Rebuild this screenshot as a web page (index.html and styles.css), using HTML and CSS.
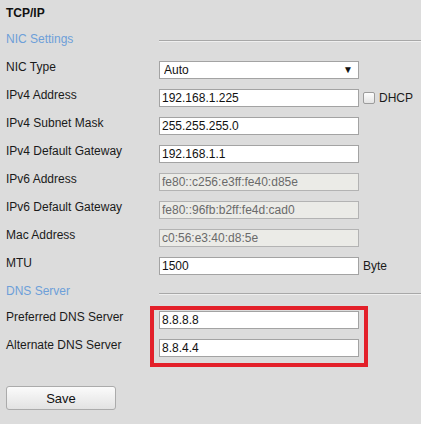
FILE: index.html
```html
<!DOCTYPE html>
<html lang="en">
<head>
    <meta charset="UTF-8">
    <meta name="viewport" content="width=device-width, initial-scale=1.0">
    <title>TCP/IP</title>
    <link rel="stylesheet" href="styles.css">
</head>
<body>
    <div class="page">
        <h1 class="title">TCP/IP</h1>

        <div class="section-head">
            <span class="section-name">NIC Settings</span>
            <span class="section-rule"></span>
        </div>

        <div class="row">
            <label class="row-label" for="nic-type">NIC Type</label>
            <span class="select-wrap">
                <select class="field" id="nic-type">
                    <option>Auto</option>
                </select>
            </span>
        </div>
        <div class="row">
            <label class="row-label" for="ipv4">IPv4 Address</label>
            <input class="field" id="ipv4" type="text" value="192.168.1.225">
            <label class="check"><input type="checkbox" class="check-box"> DHCP</label>
        </div>
        <div class="row">
            <label class="row-label" for="mask">IPv4 Subnet Mask</label>
            <input class="field" id="mask" type="text" value="255.255.255.0">
        </div>
        <div class="row">
            <label class="row-label" for="gw4">IPv4 Default Gateway</label>
            <input class="field" id="gw4" type="text" value="192.168.1.1">
        </div>
        <div class="row">
            <label class="row-label" for="ipv6">IPv6 Address</label>
            <input class="field" id="ipv6" type="text" value="fe80::c256:e3ff:fe40:d85e" disabled>
        </div>
        <div class="row">
            <label class="row-label" for="gw6">IPv6 Default Gateway</label>
            <input class="field" id="gw6" type="text" value="fe80::96fb:b2ff:fe4d:cad0" disabled>
        </div>
        <div class="row">
            <label class="row-label" for="mac">Mac Address</label>
            <input class="field" id="mac" type="text" value="c0:56:e3:40:d8:5e" disabled>
        </div>
        <div class="row">
            <label class="row-label" for="mtu">MTU</label>
            <input class="field" id="mtu" type="text" value="1500">
            <span class="unit">Byte</span>
        </div>

        <div class="section-head section-head-dns">
            <span class="section-name">DNS Server</span>
            <span class="section-rule"></span>
        </div>

        <div class="dns-group">
            <div class="row">
                <label class="row-label" for="dns1">Preferred DNS Server</label>
                <input class="field" id="dns1" type="text" value="8.8.8.8">
            </div>
            <div class="row">
                <label class="row-label" for="dns2">Alternate DNS Server</label>
                <input class="field" id="dns2" type="text" value="8.8.4.4">
            </div>
            <div class="highlight"></div>
        </div>

        <button class="save-btn" type="button">Save</button>
    </div>
</body>
</html>
```

FILE: styles.css
```css
body {
    margin: 0;
    background-color: #dcdcdc;
    font-family: "Liberation Sans", Arial, sans-serif;
    font-size: 12px;
    color: #1a1a1a;
}
.page {
    padding: 0 0 0 6px;
}
.title {
    margin: 0;
    height: 22px;
    padding-top: 2px;
    line-height: 22px;
    font-size: 12px;
    font-weight: bold;
    color: #111;
}
.section-head {
    display: flex;
    align-items: flex-start;
    height: 20px;
    margin-top: 4px;
    margin-bottom: 8px;
}
.section-head-dns {
    margin-top: 0;
    margin-bottom: 6px;
}
.section-name {
    flex: none;
    width: 153px;
    padding-top: 1px;
    line-height: 20px;
    color: #6d9fd9;
}
.section-rule {
    flex: 1;
    margin-top: 12px;
    border-top: 1px solid #a8a8a8;
    border-bottom: 1px solid #efefef;
}
.section-head-dns .section-rule {
    margin-top: 13px;
}
.row {
    display: flex;
    align-items: flex-start;
    height: 28px;
}
.row-label {
    flex: none;
    width: 153px;
    margin-top: 4px;
    line-height: 15px;
}
.field {
    box-sizing: border-box;
    width: 200px;
    height: 18px;
    margin: 5px 0 0 0;
    padding: 0 2px;
    border: 1px solid #a3a3a3;
    border-radius: 0;
    background: #fff;
    font-family: inherit;
    font-size: 12px;
    color: #111;
    outline: none;
}
.field:disabled {
    background: #ebebe7;
    border-color: #b3b3b3;
    color: #6a6a6a;
}
.select-wrap {
    position: relative;
    display: block;
}
.select-wrap .field {
    -webkit-appearance: none;
    appearance: none;
    padding-left: 4px;
    line-height: 16px;
}
.select-wrap::after {
    content: "\25BC";
    position: absolute;
    top: 9px;
    right: 6px;
    font-size: 10px;
    line-height: 10px;
    color: #111;
    pointer-events: none;
}
.check {
    display: flex;
    align-items: center;
    gap: 4px;
    margin: 5px 0 0 4px;
    height: 18px;
}
.check-box {
    -webkit-appearance: none;
    appearance: none;
    width: 12px;
    height: 12px;
    margin: 0;
    border: 1px solid #9c9c9c;
    border-radius: 2px;
    background: linear-gradient(#fdfdfd, #e4e4e4);
}
.unit {
    margin: 5px 0 0 4px;
    line-height: 18px;
}
.dns-group {
    position: relative;
}
.highlight {
    position: absolute;
    top: 0;
    left: 144px;
    width: 218px;
    height: 61px;
    box-sizing: border-box;
    border: 4px solid #e3202a;
    pointer-events: none;
}
.save-btn {
    display: block;
    width: 110px;
    height: 24px;
    margin-top: 24px;
    padding: 0;
    border: 1px solid #ababab;
    border-radius: 3px;
    background: linear-gradient(#fbfbfb, #e2e2e2);
    font-family: inherit;
    font-size: 13px;
    color: #111;
    cursor: pointer;
}
```
